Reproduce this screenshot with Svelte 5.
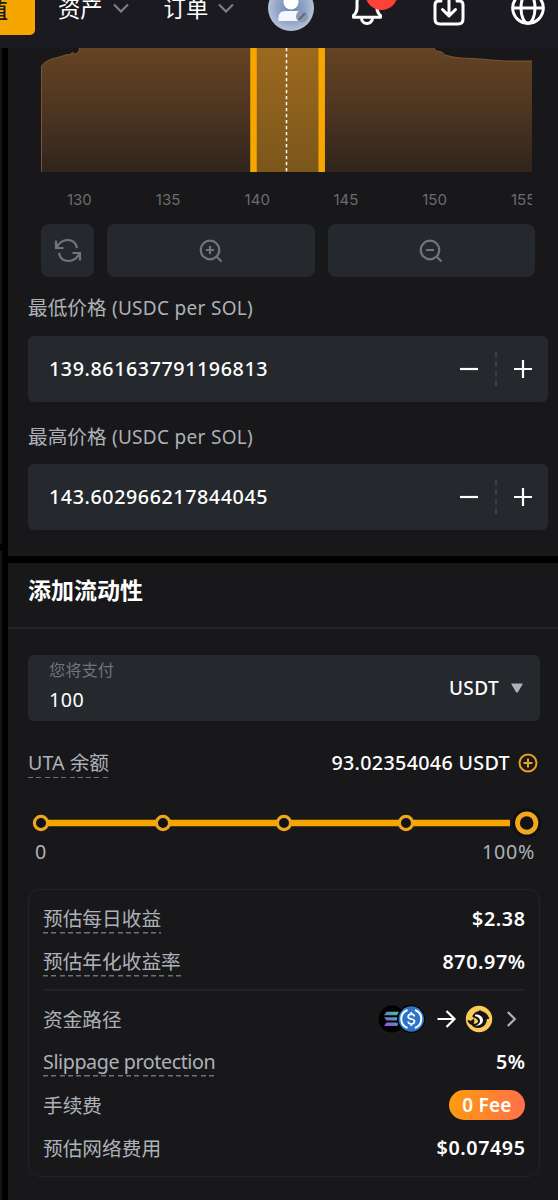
<script>
	const ticks = [130, 135, 140, 145, 150, 155];
	const stops = [13, 135, 256, 378];

	let minPrice = '139.861637791196813';
	let maxPrice = '143.602966217844045';
	let amount = '100';

	$: prices = [
		{ label: '最低价格', value: minPrice },
		{ label: '最高价格', value: maxPrice }
	];
</script>

<header class="topbar">
	<nav class="topbar-row">
		<button class="btn-deposit">充值</button>
		<span class="menu">资产</span>
		<svg class="caret" width="16" height="10" viewBox="0 0 16 10"><path d="M1 1.5l7 7 7-7" /></svg>
		<span class="menu second">订单</span>
		<svg class="caret" width="16" height="10" viewBox="0 0 16 10"><path d="M1 1.5l7 7 7-7" /></svg>
		<svg class="avatar" width="46" height="46" viewBox="0 0 46 46">
			<defs>
				<radialGradient id="face">
					<stop offset="0" stop-color="#6f86b4" />
					<stop offset="0.65" stop-color="#94a7c8" />
					<stop offset="1" stop-color="#b4c2d8" />
				</radialGradient>
			</defs>
			<circle cx="23" cy="23" r="23" fill="url(#face)" />
			<circle cx="23" cy="17" r="7.5" fill="#fff" />
			<path d="M10.5 36v-3q0-7 7-7h11q7 0 7 7v3z" fill="#f4f7fb" />
			<circle cx="34" cy="31.5" r="6" fill="#8c98ad" />
			<path d="M31 34.5l6-6" stroke="#59657a" stroke-width="2" />
		</svg>
		<svg class="bell" width="46" height="46" viewBox="0 0 46 46">
			<path class="line" d="M9.500 30.500c4.500-3 3.500-8 3.500-13a10 10 0 0 1 20 0c0 5-1 10 3.500 13v1.800h-27z" />
			<path class="line" d="M17.500 33a5.500 5.500 0 0 0 11 0" />
			<circle cx="37.500" cy="8.700" r="16.200" fill="#ff4238" />
		</svg>
		<svg class="download" width="32" height="32" viewBox="0 0 32 32">
			<path class="line" d="M8 5H6q-4 0-4 4v14q0 5 5 5h18q5 0 5-5V9q0-4-4-4h-2M16 0v20M9.500 13.500l6.500 6.500 6.500-6.500" />
		</svg>
		<svg class="globe" width="34" height="34" viewBox="0 0 34 34">
			<g class="line">
				<circle cx="17" cy="17" r="15.300" />
				<ellipse cx="17" cy="17" rx="7" ry="15.300" />
				<path d="M2 17h30" />
			</g>
		</svg>
	</nav>
</header>

<div class="page">
	<div class="edge"><i></i><i></i></div>
	<main>
		<section class="range">
			<svg class="chart" width="491" height="124" viewBox="0 0 491 124">
				<defs>
					<linearGradient id="depth" x1="0" y1="0" x2="0" y2="1">
						<stop offset="0" stop-color="#654323" />
						<stop offset="0.5" stop-color="#4e3521" />
						<stop offset="1" stop-color="#30241d" />
					</linearGradient>
					<linearGradient id="selected" x1="0" y1="0" x2="0" y2="1">
						<stop offset="0" stop-color="#9c691f" />
						<stop offset="1" stop-color="#7b561b" />
					</linearGradient>
				</defs>
				<path d="M0 124V18l4-4 6-3 8-2 6-2 6-1 1-2 2 2 3-1 2-3V0h355l2 3 6 1 3 3 8 2 8 1 20 1 10 1 14 1h33v111z" fill="url(#depth)" />
				<path d="M.5 124V18l4-4 6-3 8-2 6-2 6-1 1-2 2 2 3-1 2-3V0M393 0l2 3 6 1 3 3 8 2 8 1 20 1 10 1 14 1h32" fill="none" stroke="#7a5432" />
				<rect x="212" width="68" height="124" fill="url(#selected)" />
				<path d="M212.500 0v124M280.700 0v124" stroke="#f7a600" stroke-width="6.500" />
				<path d="M245.500 0v124" stroke="#fff" stroke-width="1.500" stroke-dasharray="3.300 2.700" />
			</svg>
			<div class="axis">
				{#each ticks as tick}
					<span>{tick}</span>
				{/each}
			</div>
			<div class="tools">
				<button class="tool reset" aria-label="reset">
					<svg width="28" height="28" viewBox="0 0 28 28">
						<path d="M2 3.500v7.500h7.500M2.500 10.500C5 6 9 3 13.500 3c5 0 8.500 3 9.500 8M26 23.500v-7.500h-7.500M25.500 16.500C23 21 19 24 14.500 24c-5 0-8.500-3-9.500-8" />
					</svg>
				</button>
				<button class="tool" aria-label="zoom in">
					<svg width="26" height="26" viewBox="0 0 26 26">
						<circle cx="12" cy="12" r="9.300" /><path d="M18.500 18.500l5 5M12 8v8M8 12h8" />
					</svg>
				</button>
				<button class="tool" aria-label="zoom out">
					<svg width="26" height="26" viewBox="0 0 26 26">
						<circle cx="12" cy="12" r="9.300" /><path d="M18.500 18.500l5 5M8 12h8" />
					</svg>
				</button>
			</div>
			{#each prices as price}
				<div class="price-label">{price.label} <span>(USDC per SOL)</span></div>
				<div class="price-box">
					<span class="price">{price.value}</span>
					<svg class="step" width="20" height="20" viewBox="0 0 20 20"><path d="M1 10h18" /></svg>
					<svg class="split" width="2" height="34" viewBox="0 0 2 34"><path d="M1 0v34" /></svg>
					<svg class="step" width="20" height="20" viewBox="0 0 20 20"><path d="M1 10h18M10 1v18" /></svg>
				</div>
			{/each}
		</section>

		<h2>添加流动性</h2>

		<section class="liquidity">
			<div class="pay-box">
				<div class="pay">
					<span class="pay-label">您将支付</span>
					<span class="pay-value">{amount}</span>
				</div>
				<span class="coin">USDT</span>
				<svg width="12" height="10" viewBox="0 0 12 10"><path d="M1 .5h10q1 0 .5 1L7 9q-1 1-2 0L.5 1.500Q0 .5 1 .5z" fill="#adb1b8" /></svg>
			</div>
			<div class="balance">
				<span class="hint uta">UTA 余额</span>
				<span class="balance-value">93.02354046 USDT</span>
				<svg width="20" height="20" viewBox="0 0 20 20">
					<g fill="none" stroke="#e9a21f" stroke-width="2">
						<circle cx="10" cy="10" r="8.500" /><path d="M10 5.500v9M5.500 10h9" />
					</g>
				</svg>
			</div>
			<svg class="slider" width="516" height="32" viewBox="0 0 516 32">
				<path d="M13 16h469" stroke="#f7a600" stroke-width="6.500" />
				{#each stops as x}
					<circle cx={x} cy="16" r="6.600" fill="#121214" stroke="#eda61f" stroke-width="3.200" />
				{/each}
				<circle cx="498.700" cy="16" r="14.500" fill="#101012" />
				<circle cx="498.700" cy="16" r="9.200" fill="#121214" stroke="#f2a81c" stroke-width="4.800" />
			</svg>
			<div class="scale"><span>0</span><span class="full">100%</span></div>

			<div class="card">
				<div class="row"><span class="hint">预估每日收益</span><b>$2.38</b></div>
				<div class="row"><span class="hint">预估年化收益率</span><b>870.97%</b></div>
				<hr />
				<div class="row">
					<span>资金路径</span>
					<svg class="route" width="147" height="32" viewBox="0 0 147 32">
						<defs>
							<linearGradient id="sol" x1="0" y1="1" x2="1" y2="0">
								<stop offset="0" stop-color="#9a50e8" />
								<stop offset="0.5" stop-color="#6285bd" />
								<stop offset="1" stop-color="#39d69c" />
							</linearGradient>
						</defs>
						<circle cx="14" cy="16" r="13.500" fill="#020203" />
						<path d="M8.500 8.800h13l-2.500 3.400H6zM6 14.200h13l2.500 3.400h-13zM8.500 19.600h13L19 23H6z" fill="url(#sol)" />
						<circle cx="33" cy="16" r="14" fill="#020203" />
						<circle cx="33.300" cy="16" r="12.700" fill="#2e75c9" />
						<path d="M29.500 7a9.600 9.600 0 0 0 0 18M37 7a9.600 9.600 0 0 1 0 18" fill="none" stroke="#fff" stroke-width="2" />
						<path d="M36.500 13.500q-.5-2.300-3.200-2.300t-3.200 2.300q0 2 3.200 2.500t3.200 2.500q-.3 2.500-3.200 2.500t-3.200-2.500M33.300 9v2.500M33.300 20.500V23" fill="none" stroke="#fff" stroke-width="1.700" />
						<path d="M59.500 16h16M68.500 8l8 8-8 8" fill="none" stroke="#fff" stroke-width="2.200" />
						<circle cx="101" cy="16" r="13.200" fill="#fbcb59" />
						<path d="M95.300 11.500C97 9 99 8.300 100.300 8.300c1-1.300 2.500-1.200 3-.3 4 1 7 4 8 7.700l-2.600.6c.5 4-3 8.700-8.400 8.700-3 0-5.500-1-6.600-3-2-.7-3.700-2.500-4.400-5l3.700.8 3-2.300.3 3.500-.8 1.500c1.500.8 4.500 0 4.500-2.200 0-2-2-3-4.500-3.800-1.500-.5-1.500-1.500-.2-3z" fill="#171310" />
						<path d="M97 11.800c3.500-1 8 1.500 8 5.500 0 3.500-3.500 6-8 5.300 3-.5 5-2.300 5-4.600 0-3-2-4.200-5-4.700z" fill="#fff" />
						<path d="M129.800 9l7 7-7 7" fill="none" stroke="#adb1b8" stroke-width="2.200" />
					</svg>
				</div>
				<div class="row"><span class="hint slippage">Slippage protection</span><b>5%</b></div>
				<div class="row"><span>手续费</span><b class="fee">0 Fee</b></div>
				<div class="row"><span>预估网络费用</span><b>$0.07495</b></div>
			</div>
		</section>
	</main>
</div>

<style>
	:global(body) {
		background: #18181a;
		overflow: hidden;
		font-family: 'Noto Sans', 'Noto Sans CJK SC', sans-serif;
		font-size: 19.7px;
		color: #fff;
	}

	svg {
		display: block;
		flex: none;
	}

	button {
		border: none;
		padding: 0;
		font-family: inherit;
	}

	.topbar {
		height: 48px;
		background: #1a1a20;
	}

	.topbar-row {
		display: flex;
		align-items: center;
		height: 16px;
	}

	.btn-deposit {
		flex: none;
		width: 35px;
		height: 54px;
		display: flex;
		align-items: center;
		justify-content: flex-end;
		padding-right: 27px;
		box-sizing: border-box;
		border-radius: 0 5px 5px 0;
		background: #f7a600;
		color: #1a1a20;
		font-size: 22px;
		font-weight: 500;
		white-space: nowrap;
	}

	.menu {
		margin: -2px 10px 0 23px;
		font-family: 'Noto Sans CJK SC', sans-serif;
		font-size: 22.3px;
		line-height: 30px;
		white-space: nowrap;
	}

	.menu.second {
		margin-left: 35px;
	}

	.caret {
		fill: none;
		stroke: #818186;
		stroke-width: 2;
	}

	.avatar {
		margin-left: 34px;
	}

	.bell {
		margin-left: 30px;
		overflow: visible;
	}

	.line {
		fill: none;
		stroke: #fff;
		stroke-width: 3;
		stroke-linecap: round;
		stroke-linejoin: round;
	}

	.download {
		margin: 7px 0 0 43px;
	}

	.globe {
		margin-left: 46px;
	}

	.page {
		display: flex;
		height: 1152px;
	}

	.edge {
		width: 8px;
		flex: none;
		background: #000;
	}

	.edge i {
		display: block;
		width: 2px;
		height: 496px;
		background: #151517;
	}

	.edge i + i {
		height: 649px;
		margin-top: 7px;
	}

	main {
		flex: 1;
		min-width: 0;
	}

	.range {
		height: 508px;
		border-bottom: 7px solid #000;
	}

	.chart {
		margin-left: 33px;
	}

	.axis {
		display: flex;
		width: 491px;
		height: 52px;
		margin-left: 33px;
		padding-top: 3px;
		box-sizing: border-box;
		overflow: hidden;
		font-family: Inter, sans-serif;
		font-size: 15px;
		line-height: 50px;
		color: #6a6c70;
	}

	.axis span {
		flex: none;
		width: 88.8px;
		text-indent: 26px;
	}

	.tools {
		display: flex;
		gap: 13px;
		width: 494px;
		margin-left: 33px;
	}

	.tool {
		display: flex;
		align-items: center;
		justify-content: center;
		flex: 1;
		height: 53px;
		border-radius: 8px;
		background: #25282c;
	}

	.tool.reset {
		flex: none;
		width: 53px;
	}

	.tool svg {
		fill: none;
		stroke: #72757a;
		stroke-width: 2.2;
	}

	.price-label {
		height: 59px;
		margin-left: 20px;
		line-height: 62px;
		color: #adb1b8;
		white-space: nowrap;
	}

	.price-box + .price-label {
		height: 62px;
		line-height: 69px;
	}

	.price-label span {
		font-size: 19px;
		letter-spacing: 0.3px;
	}

	.price-box {
		display: flex;
		align-items: center;
		height: 66px;
		margin: 0 10px 0 20px;
		padding: 0 15px 0 21px;
		border-radius: 6px;
		background: #25282c;
	}

	.price {
		flex: 1;
		padding-bottom: 1px;
		font-weight: 500;
		letter-spacing: 0.58px;
	}

	.step {
		fill: none;
		stroke: #fff;
		stroke-width: 2.2;
	}

	.split {
		margin: 0 16px;
		stroke: #46494f;
		stroke-width: 1.5;
		stroke-dasharray: 5.5 4;
	}

	h2 {
		margin: 0;
		height: 64px;
		padding-left: 20px;
		border-bottom: 2px solid #252527;
		font-family: 'Noto Sans CJK SC', sans-serif;
		font-size: 23px;
		font-weight: 700;
		line-height: 52px;
	}

	.liquidity {
		padding: 26px 18px 0 20px;
	}

	.pay-box {
		display: flex;
		align-items: center;
		height: 66px;
		padding: 0 17px 0 21px;
		border-radius: 6px;
		background: #25282c;
	}

	.pay {
		display: flex;
		flex-direction: column;
		flex: 1;
		padding-bottom: 6px;
	}

	.pay-label {
		font-size: 16.3px;
		line-height: 30px;
		color: #71757a;
	}

	.pay-value {
		line-height: 30px;
		letter-spacing: 0.5px;
	}

	.coin {
		margin-right: 12px;
		font-size: 19px;
		font-weight: 500;
		letter-spacing: 0.4px;
	}

	.balance {
		display: flex;
		align-items: center;
		height: 84px;
		padding-right: 2px;
	}

	.hint {
		line-height: 30px;
		background: repeating-linear-gradient(90deg, #6f7278 0 5px, transparent 5px 8.3px) left bottom / 100% 1.5px no-repeat;
	}

	.uta {
		color: #adb1b8;
	}

	.balance-value {
		margin: -2px 8px 0 auto;
		font-weight: 500;
		letter-spacing: 0.33px;
	}

	.slider {
		margin-top: 2px;
	}

	.scale {
		display: flex;
		justify-content: space-between;
		height: 50px;
		padding: 0 5px 0 7px;
		line-height: 26px;
		color: #adb1b8;
	}

	.full {
		letter-spacing: 0.7px;
	}

	.card {
		border: 1px solid #242427;
		border-radius: 12px;
		padding: 7px 14px;
	}

	.row {
		display: flex;
		align-items: center;
		justify-content: space-between;
		height: 43px;
		color: #adb1b8;
	}

	.row b {
		margin-right: -0.6px;
		color: #fff;
		font-weight: 600;
		letter-spacing: 0.6px;
	}

	.slippage {
		letter-spacing: -0.42px;
	}

	hr {
		height: 2px;
		margin: 6px 0;
		border: none;
		background: #222224;
	}

	.row .fee {
		width: 76px;
		margin-right: 0;
		border-radius: 15px;
		background: linear-gradient(100deg, #ff9c0c, #ff6f4c);
		font-size: 19px;
		letter-spacing: 0.2px;
		line-height: 30px;
		text-align: center;
	}
</style>
